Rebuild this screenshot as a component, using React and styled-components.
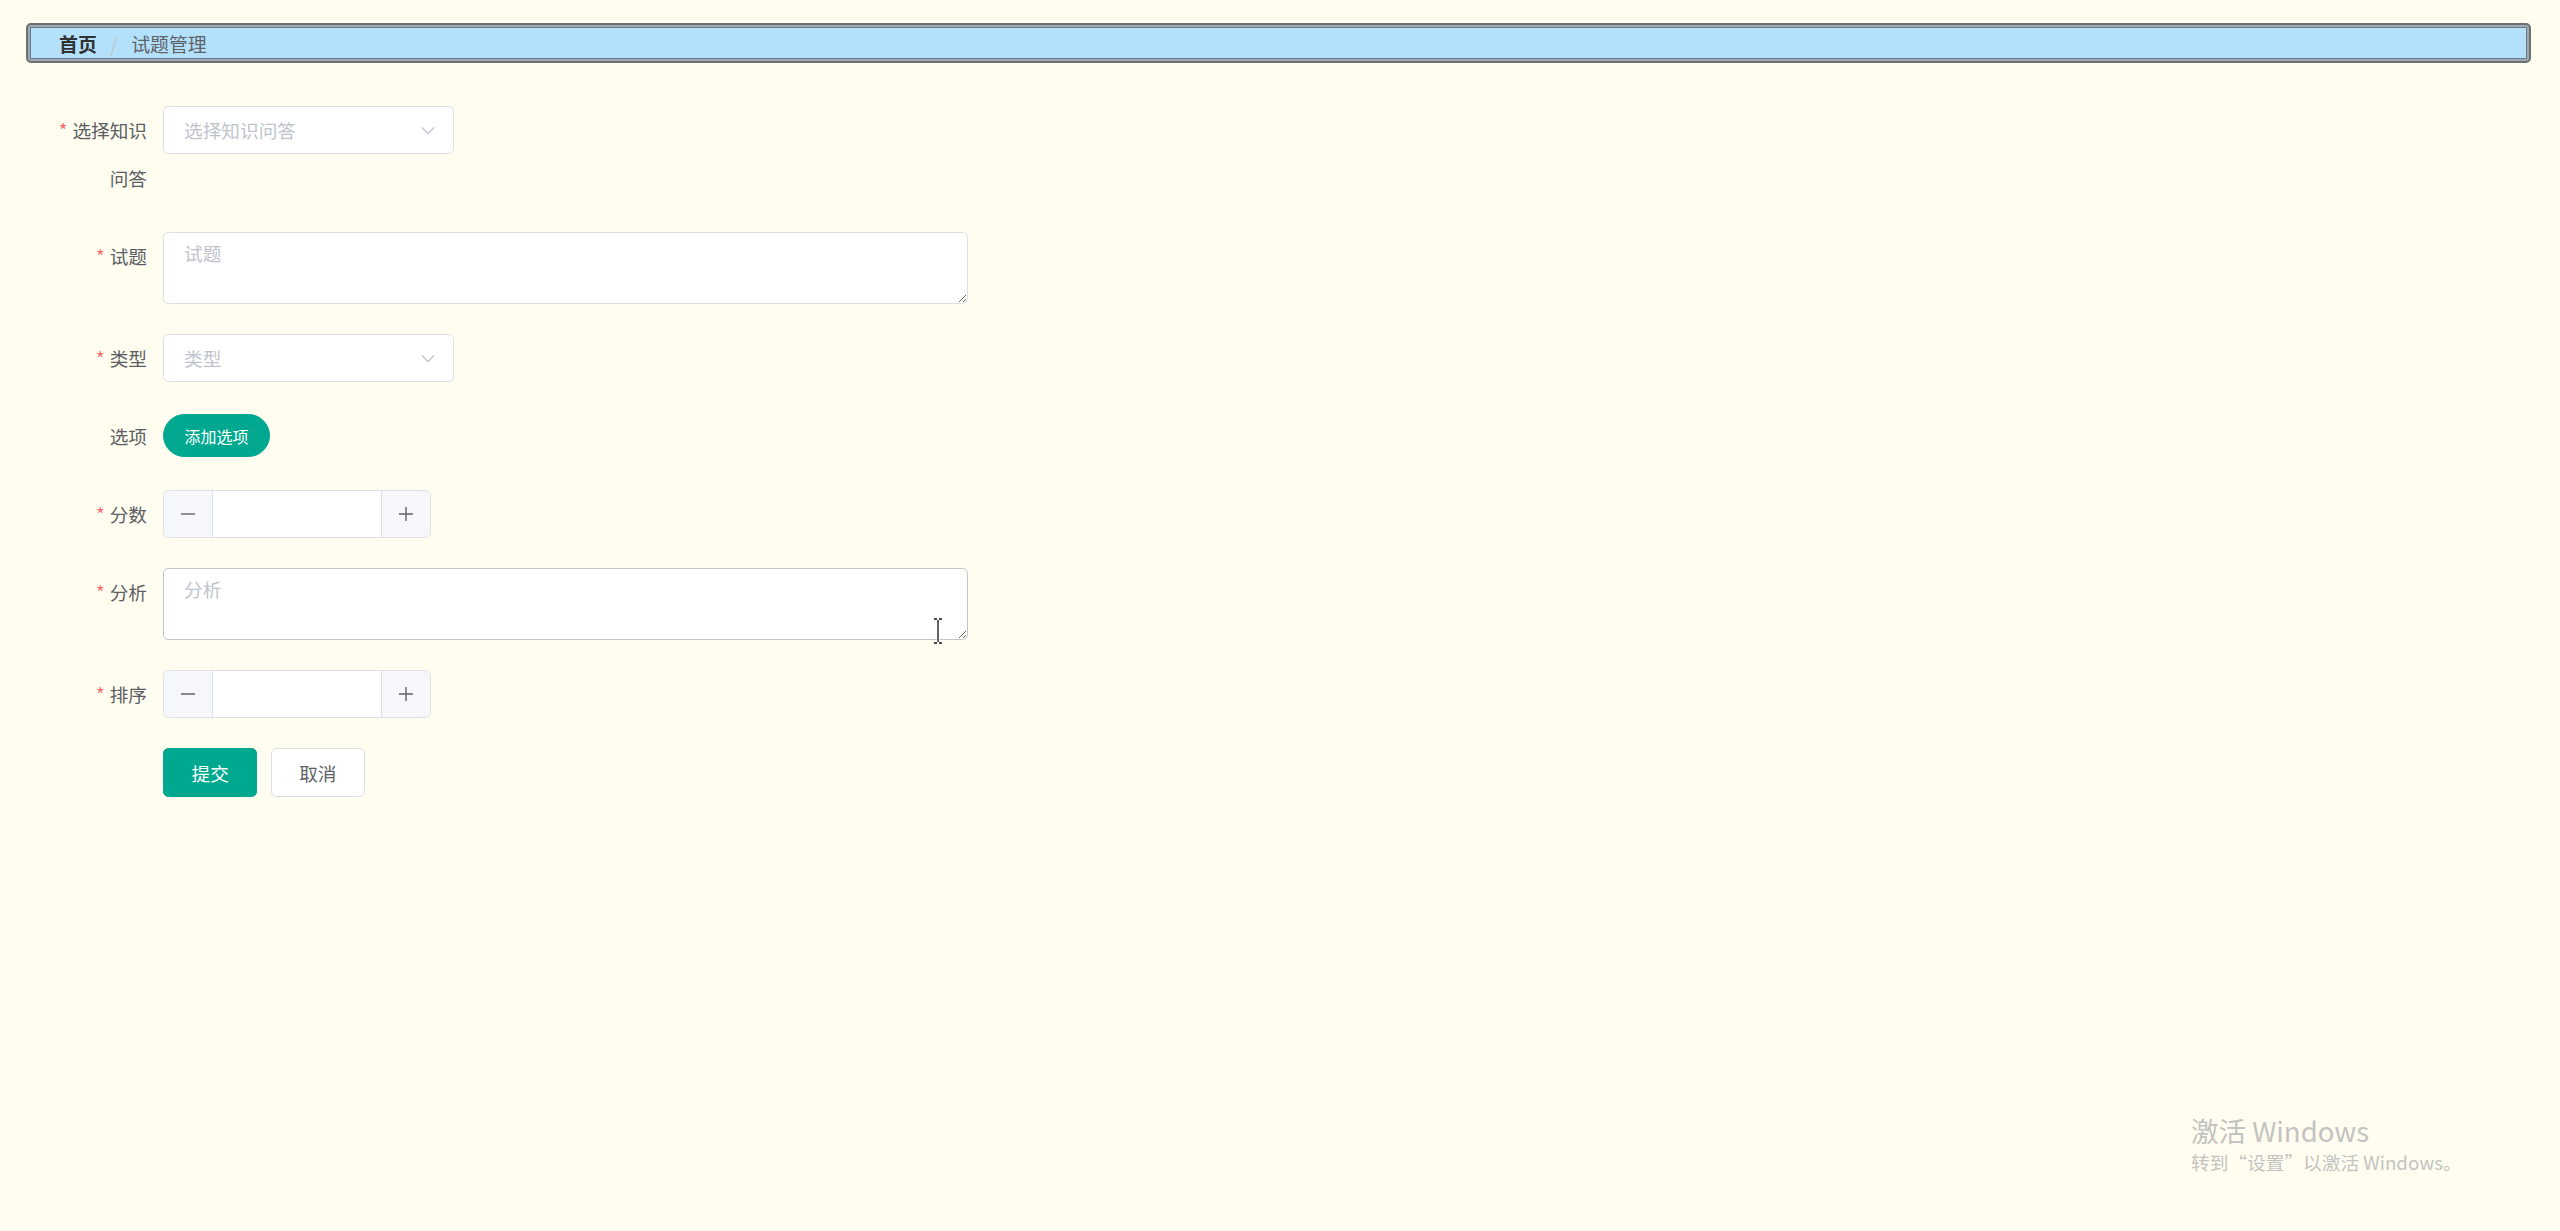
import React from 'react';
import styled, { createGlobalStyle } from 'styled-components';

const GlobalStyle = createGlobalStyle`
  html, body {
    margin: 0;
    padding: 0;
    background: #fffdf0;
  }
  body {
    font-family: "Noto Sans CJK SC", "Noto Sans", sans-serif;
    color: #606266;
  }
  * {
    box-sizing: border-box;
  }
`;

const Page = styled.div`
  position: relative;
  min-height: 1231px;
  padding: 23px 29px 0 26px;
`;

const Breadcrumb = styled.div`
  height: 40px;
  display: flex;
  align-items: center;
  padding-left: 31px;
  background: #b3e1fc;
  border: 2px solid #6f6f6f;
  border-radius: 5px;
  box-shadow: inset 0 0 0 2px #9aaab6, inset 0 0 0 3px #6e7983;
  font-size: 18.9px;
`;

const Crumb = styled.span`
  color: ${props => (props.active ? '#303133' : '#606266')};
  font-weight: ${props => (props.active ? 700 : 400)};
`;

const Separator = styled.span`
  color: #c0c4cc;
  margin: 0 13.5px;
`;

const Form = styled.form`
  margin-top: 42.5px;
  padding-left: 30px;
  display: flex;
  flex-direction: column;
  gap: 30px;
`;

const Item = styled.div`
  display: flex;
  align-items: flex-start;
`;

const Label = styled.label`
  width: 107px;
  flex: none;
  padding-right: 16px;
  text-align: right;
  font-size: 18.67px;
  line-height: 48px;
  color: #5c5e63;

  ${props =>
    props.required
      ? `
    &::before {
      content: '*';
      color: #f56c6c;
      margin-right: 5px;
    }
  `
      : ''}
`;

const Content = styled.div`
  display: flex;
  align-items: center;
  min-height: 48px;
`;

const Select = styled.div`
  width: 291px;
  height: 48px;
  display: flex;
  align-items: center;
  justify-content: space-between;
  padding: 0 16px 0 20px;
  background: #fff;
  border: 1px solid #dcdfe6;
  border-radius: 5.33px;
  font-size: 18.67px;
  color: #c0c4cc;
`;

const TextArea = styled.textarea`
  display: block;
  width: 805px;
  height: 72px;
  padding: 6.67px 20px;
  background: #fff;
  border: 1px solid ${props => (props.hover ? '#c0c4cc' : '#dcdfe6')};
  border-radius: 5.33px;
  font-family: "Noto Sans CJK SC", "Noto Sans", sans-serif;
  font-size: 18.67px;
  line-height: 1.5;
  color: #606266;
  resize: vertical;
  outline: none;

  &::placeholder {
    color: #c0c4cc;
  }
`;

const RoundButton = styled.button`
  height: 42.67px;
  padding: 0 20.5px;
  border: 1px solid #00a88f;
  border-radius: 22px;
  background: #00a88f;
  color: #fff;
  font-family: inherit;
  font-size: 16px;
`;

const NumberBox = styled.div`
  width: 268px;
  height: 48px;
  display: flex;
  background: #fff;
  border: 1px solid #dcdfe6;
  border-radius: 5.33px;
  overflow: hidden;
`;

const Step = styled.span`
  width: 49px;
  flex: none;
  display: flex;
  align-items: center;
  justify-content: center;
  background: #f5f7fa;
  color: #606266;
  border-${props => (props.right ? 'left' : 'right')}: 1px solid #dcdfe6;
`;

const NumberInput = styled.input`
  flex: 1;
  min-width: 0;
  border: none;
  outline: none;
  background: #fff;
  text-align: center;
  font-family: inherit;
  font-size: 18.67px;
`;

const Actions = styled.div`
  display: flex;
  gap: 13.33px;
  margin-left: 107px;
`;

const Button = styled.button`
  height: 49px;
  padding: 0 27.5px;
  border: 1px solid ${props => (props.primary ? '#00a88f' : '#dcdfe6')};
  border-radius: 5.33px;
  background: ${props => (props.primary ? '#00a88f' : '#fff')};
  color: ${props => (props.primary ? '#fff' : '#606266')};
  font-family: inherit;
  font-size: 18.67px;
`;

const Cursor = styled.svg`
  position: absolute;
  left: 932px;
  top: 618px;
`;

const Watermark = styled.div`
  position: absolute;
  left: 2191px;
  top: 1112px;
  color: #c3c3c1;
  font-family: "Noto Sans CJK SC", "Noto Sans", sans-serif;
`;

const WatermarkTitle = styled.div`
  font-size: 27.5px;
  line-height: 37px;
`;

const WatermarkText = styled.div`
  font-size: 18.7px;
  line-height: 26px;
`;

const Chevron = () => (
  <svg width="18" height="18" viewBox="0 0 18 18" fill="none">
    <path d="M3 6.5 L9 12.5 L15 6.5" stroke="#c0c4cc" strokeWidth="1.4" />
  </svg>
);

const Minus = () => (
  <svg width="18" height="18" viewBox="0 0 18 18">
    <path d="M2 9 H16" stroke="#606266" strokeWidth="1.4" />
  </svg>
);

const Plus = () => (
  <svg width="18" height="18" viewBox="0 0 18 18">
    <path d="M2 9 H16 M9 2 V16" stroke="#606266" strokeWidth="1.4" />
  </svg>
);

const NumberField = () => (
  <NumberBox>
    <Step>
      <Minus />
    </Step>
    <NumberInput type="text" />
    <Step right>
      <Plus />
    </Step>
  </NumberBox>
);

export default function App() {
  return (
    <Page>
      <GlobalStyle />
      <Breadcrumb>
        <Crumb active>首页</Crumb>
        <Separator>/</Separator>
        <Crumb>试题管理</Crumb>
      </Breadcrumb>

      <Form onSubmit={e => e.preventDefault()}>
        <Item>
          <Label required>选择知识问答</Label>
          <Content>
            <Select>
              <span>选择知识问答</span>
              <Chevron />
            </Select>
          </Content>
        </Item>
        <Item>
          <Label required>试题</Label>
          <TextArea placeholder="试题" />
        </Item>
        <Item>
          <Label required>类型</Label>
          <Content>
            <Select>
              <span>类型</span>
              <Chevron />
            </Select>
          </Content>
        </Item>
        <Item>
          <Label>选项</Label>
          <Content>
            <RoundButton type="button">添加选项</RoundButton>
          </Content>
        </Item>
        <Item>
          <Label required>分数</Label>
          <Content>
            <NumberField />
          </Content>
        </Item>
        <Item>
          <Label required>分析</Label>
          <TextArea placeholder="分析" hover />
        </Item>
        <Item>
          <Label required>排序</Label>
          <Content>
            <NumberField />
          </Content>
        </Item>
        <Actions>
          <Button primary type="submit">提交</Button>
          <Button type="button">取消</Button>
        </Actions>
      </Form>

      <Cursor width="12" height="26" viewBox="0 0 12 26">
        <path d="M2 1 H5 M7 1 H10 M6 2 V24 M2 25 H5 M7 25 H10" stroke="#fff" strokeWidth="3" />
        <path d="M2 1 H5 M7 1 H10 M6 2 V24 M2 25 H5 M7 25 H10" stroke="#111" strokeWidth="1.3" />
      </Cursor>

      <Watermark>
        <WatermarkTitle>激活 Windows</WatermarkTitle>
        <WatermarkText>转到“设置”以激活 Windows。</WatermarkText>
      </Watermark>
    </Page>
  );
}
